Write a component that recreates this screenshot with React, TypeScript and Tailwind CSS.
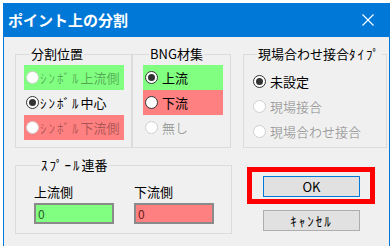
import clsx from 'clsx'

// half-width katakana renders narrower here than in the original UI font, so widen it a bit
function Label({ text }: { text: string }) {
  const parts = text.split(/([\uFF61-\uFF9F]+)/)
  return (
    <>
      {parts.map((p, i) =>
        /[\uFF61-\uFF9F]/.test(p) ? (
          <span key={i} className="tracking-[2px]">
            {p}
          </span>
        ) : (
          <span key={i}>{p}</span>
        )
      )}
    </>
  )
}

function Radio({ checked = false, disabled = false }: { checked?: boolean; disabled?: boolean }) {
  return (
    <span
      className={clsx(
        'w-[13px] h-[13px] rounded-full border bg-white flex items-center justify-center shrink-0',
        disabled ? 'border-[#cfcfcf]' : 'border-[#333333]'
      )}
    >
      {checked && <span className="w-[7px] h-[7px] rounded-full bg-[#333333]" />}
    </span>
  )
}

function Option({
  label,
  checked,
  disabled,
  bg,
  gap = 'gap-[1px]',
}: {
  label: string
  checked?: boolean
  disabled?: boolean
  bg?: string
  gap?: string
}) {
  return (
    <div className={clsx('h-[25px] flex items-center pl-[2px]', gap, bg)}>
      <Radio checked={checked} disabled={disabled} />
      <span className={clsx('text-[13px] leading-[16px] whitespace-nowrap', disabled ? 'text-black/35' : 'text-black')}>
        <Label text={label} />
      </span>
    </div>
  )
}

function Group({ title, className, children }: { title: string; className?: string; children: React.ReactNode }) {
  return (
    <fieldset className={clsx('border border-[#dcdcdc] min-w-0', className)}>
      <legend className="ml-[6px] px-[1px] text-[13px] leading-[16px] text-black whitespace-nowrap">
        <Label text={title} />
      </legend>
      {children}
    </fieldset>
  )
}

export default function App() {
  return (
    <div className="relative w-[392px] h-[246px] bg-white overflow-hidden font-['Noto_Sans_CJK_JP',sans-serif]">
      <div className="ml-[3px] mt-[3px] w-[387px] h-[243px] flex flex-col">
        <div className="h-[34px] shrink-0 bg-[#0078d7] flex items-center justify-between pl-[5px] pr-[16px]">
          <span className="text-white text-[15px] font-bold leading-[20px]">ポイント上の分割</span>
          <svg width="12" height="12" viewBox="0 0 12 12" fill="none" stroke="white" strokeWidth="1.1">
            <path d="M0.5 0.5L11.5 11.5M11.5 0.5L0.5 11.5" />
          </svg>
        </div>

        <div className="flex-1 bg-[#f0f0f0] border-x border-[#0078d7] pl-[11px] pt-[9px] flex flex-col gap-[9px]">
          <div className="flex items-start">
            <Group title="分割位置" className="w-[117px] h-[102px] pl-[8px] pr-[7px] pt-[3px]">
              <Option label="ｼﾝﾎﾞﾙ上流側" disabled bg="bg-[#80ff80]" />
              <Option label="ｼﾝﾎﾞﾙ中心" checked />
              <Option label="ｼﾝﾎﾞﾙ下流側" disabled bg="bg-[#ff8080]" />
            </Group>
            <Group title="BNG材集" className="w-[99px] h-[102px] pl-[10px] pr-[7px] pt-[3px]">
              <Option label="上流" checked bg="bg-[#80ff80]" gap="gap-[4px]" />
              <Option label="下流" bg="bg-[#ff8080]" gap="gap-[4px]" />
              <Option label="無し" disabled gap="gap-[4px]" />
            </Group>
            <Group title="現場合わせ接合ﾀｲﾌﾟ" className="ml-[12px] w-[144px] h-[102px] pl-[7px] pt-[7px]">
              <Option label="未設定" checked gap="gap-[4px]" />
              <Option label="現場接合" disabled gap="gap-[4px]" />
              <Option label="現場合わせ接合" disabled gap="gap-[4px]" />
            </Group>
          </div>

          <div className="flex items-start">
            <Group title="ｽﾌﾟｰﾙ連番" className="w-[217px] h-[77px] pl-[18px] pt-[11px]">
              <div className="flex gap-[20px]">
                <div className="flex flex-col gap-[3px]">
                  <span className="text-[13px] leading-[16px] text-black">上流側</span>
                  <div className="w-[80px] h-[21px] border-2 border-[#8a8a8a] bg-[#80ff80] pl-[2px] flex items-center">
                    <span className="text-[12px] leading-[14px] text-[#2a5e2a]">0</span>
                  </div>
                </div>
                <div className="flex flex-col gap-[3px]">
                  <span className="text-[13px] leading-[16px] text-black">下流側</span>
                  <div className="w-[80px] h-[21px] border-2 border-[#8a8a8a] bg-[#ff8080] pl-[2px] flex items-center">
                    <span className="text-[12px] leading-[14px] text-[#6a2020]">0</span>
                  </div>
                </div>
              </div>
            </Group>
            <div className="ml-[31px] pt-[19px] flex flex-col gap-[13px]">
              <button className="w-[97px] h-[21px] bg-[#e1e1e1] border border-[#0078d7] text-[13px] leading-[16px] text-black">
                OK
              </button>
              <button className="w-[97px] h-[21px] bg-[#e1e1e1] border border-[#adadad] text-[13px] leading-[16px] text-black">
                <Label text="ｷｬﾝｾﾙ" />
              </button>
            </div>
          </div>
        </div>
      </div>

      {/* red annotation frame around OK */}
      <div className="absolute left-[247px] top-[167px] w-[128px] h-[37px] border-[5px] border-[#ff0000] pointer-events-none" />
    </div>
  )
}
